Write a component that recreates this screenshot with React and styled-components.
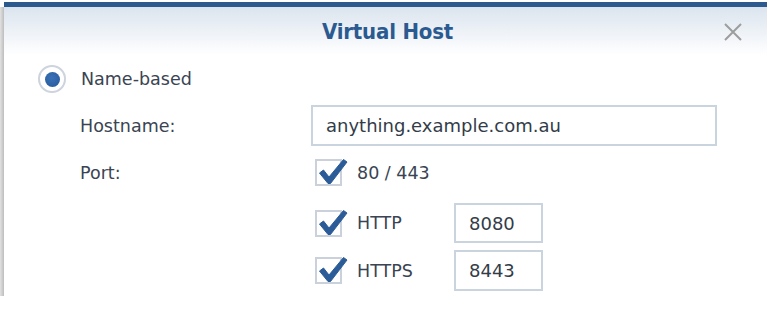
import React from 'react';
import styled, { createGlobalStyle } from 'styled-components';

const GlobalStyle = createGlobalStyle`
  html, body {
    margin: 0;
    padding: 0;
    background: #ffffff;
  }
  body {
    font-family: "DejaVu Sans", Verdana, sans-serif;
  }
`;

const Page = styled.div`
  width: 778px;
  height: 309px;
  display: flex;
  align-items: flex-start;
  padding-top: 2px;
  box-sizing: border-box;
  overflow: hidden;
`;

const ShadowStrip = styled.div`
  width: 4px;
  height: 289px;
  margin-top: 5px;
  background: linear-gradient(to right, #e2e2e2, #bdbdbd);
`;

const Window = styled.div`
  width: 763px;
  height: 294px;
  display: flex;
  flex-direction: column;
  background: #ffffff;
`;

const TopBar = styled.div`
  height: 5px;
  background: #2d5a8e;
`;

const Header = styled.div`
  height: 48px;
  display: grid;
  grid-template-columns: 1fr auto 1fr;
  align-items: center;
  background: linear-gradient(to bottom, #dbe4ee, #ffffff);
  padding-right: 25px;
  padding-left: 25px;
`;

const Title = styled.div`
  grid-column: 2;
  font-family: "DejaVu Sans Condensed", "DejaVu Sans", sans-serif;
  font-weight: bold;
  font-size: 22px;
  color: #2b5a91;
  letter-spacing: -0.2px;
  margin-left: 4px;
`;

const CloseButton = styled.div`
  justify-self: end;
  width: 18px;
  height: 18px;
  display: flex;
  margin-top: 2px;
`;

const Body = styled.div`
  padding-left: 34px;
  color: #3a4452;
  font-size: 17.5px;
`;

const RadioRow = styled.div`
  height: 48px;
  display: flex;
  align-items: center;
  gap: 15px;
`;

const Radio = styled.div`
  width: 28px;
  height: 28px;
  box-sizing: border-box;
  border-radius: 50%;
  border: 2px solid #cdd4dd;
  background: #fff;
  display: flex;
  align-items: center;
  justify-content: center;
  &::after {
    content: '';
    width: 15px;
    height: 15px;
    border-radius: 50%;
    background: radial-gradient(circle at 45% 40%, #3a72b6, #25579a);
  }
`;

const Form = styled.div`
  padding-left: 42px;
  display: flex;
  flex-direction: column;
`;

const FieldRow = styled.div`
  display: grid;
  grid-template-columns: 231px 1fr;
  align-items: center;
  height: ${p => p.$height}px;
  margin-top: ${p => p.$top}px;
`;

const Label = styled.div``;

const TextBox = styled.div`
  box-sizing: border-box;
  width: ${p => p.$width}px;
  height: ${p => p.$height}px;
  border: 2px solid #c9d4df;
  padding-left: 13px;
  display: flex;
  align-items: center;
  color: #333c48;
  font-size: 18px;
`;

const CheckLine = styled.div`
  display: flex;
  align-items: center;
  padding-left: 4px;
`;

const CheckBox = styled.div`
  position: relative;
  width: 27px;
  height: 27px;
  box-sizing: border-box;
  border: 2px solid #cad1da;
  background: #fff;
  flex-shrink: 0;
  svg {
    position: absolute;
    left: 1px;
    top: -3px;
  }
`;

const CheckText = styled.div`
  margin-left: 15px;
  width: ${p => p.$width || 'auto'};
`;

const CheckMark = () => (
  <svg width="30" height="28" viewBox="0 0 30 28">
    <path
      d="M1.5 15 L5.5 12 L11 19 L25.5 1.5 L29 4 L12.5 25.5 L10 25.5 Z"
      fill="#2c5c97"
      stroke="#2c5c97"
      strokeWidth="1"
      strokeLinejoin="round"
    />
  </svg>
);

const Check = ({ label, width, children }) => (
  <CheckLine>
    <CheckBox><CheckMark /></CheckBox>
    <CheckText $width={width}>{label}</CheckText>
    {children}
  </CheckLine>
);

const CloseIcon = () => (
  <svg width="18" height="18" viewBox="0 0 18 18">
    <path d="M1 1 L17 17 M17 1 L1 17" stroke="#9d9d9d" strokeWidth="2" />
  </svg>
);

export default function App() {
  return (
    <>
      <GlobalStyle />
      <Page>
        <ShadowStrip />
        <Window>
          <TopBar />
          <Header>
            <Title>Virtual Host</Title>
            <CloseButton><CloseIcon /></CloseButton>
          </Header>
          <Body>
            <RadioRow>
              <Radio />
              <span>Name-based</span>
            </RadioRow>
            <Form>
              <FieldRow $height={41} $top={2}>
                <Label>Hostname:</Label>
                <TextBox $width={406} $height={41}>anything.example.com.au</TextBox>
              </FieldRow>
              <FieldRow $height={27} $top={13}>
                <Label>Port:</Label>
                <Check label="80 / 443" />
              </FieldRow>
              <FieldRow $height={40} $top={17}>
                <Label />
                <Check label="HTTP" width="97px">
                  <TextBox $width={89} $height={40}>8080</TextBox>
                </Check>
              </FieldRow>
              <FieldRow $height={41} $top={7}>
                <Label />
                <Check label="HTTPS" width="97px">
                  <TextBox $width={89} $height={41}>8443</TextBox>
                </Check>
              </FieldRow>
            </Form>
          </Body>
        </Window>
      </Page>
    </>
  );
}
